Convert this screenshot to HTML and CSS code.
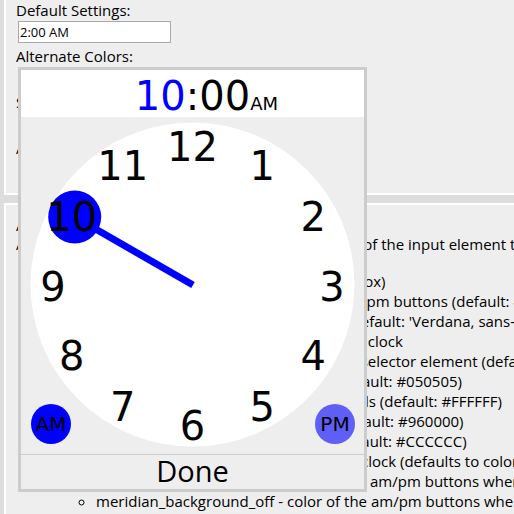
FILE: index.html
```html
<!DOCTYPE html>
<html lang="en">
<head>
<meta charset="utf-8">
<title>Clock Timepicker</title>
<link rel="stylesheet" href="styles.css">
</head>
<body>
<div class="page">
  <section class="panel panel-settings">
    <div class="label">Default Settings:</div>
    <div class="field"><input class="time-input" type="text" value="2:00 AM"></div>
    <div class="label">Alternate Colors:</div>
    <div class="field">
      <input class="time-input" type="text" value="10:00 AM">
      <div class="picker">
        <div class="picker-header">
          <span class="picker-spacer"></span>
          <span class="picker-time"><span class="picker-hour">10</span>:00</span>
          <span class="picker-meridian">AM</span>
        </div>
        <div class="picker-clock">
          <svg class="clock-face" width="343" height="337" viewBox="0 0 343 337">
            <circle cx="171.5" cy="167.5" r="162" fill="#ffffff"/>
            <line x1="172" y1="168" x2="53.7" y2="100" stroke="#0000ff" stroke-width="7"/>
            <circle cx="53.7" cy="100" r="26.5" fill="#0000ff"/>
            <g class="clock-numbers">
              <text x="171.5" y="44.1">12</text>
              <text x="241.25" y="62.8">1</text>
              <text x="292.3" y="113.85">2</text>
              <text x="311" y="183.6">3</text>
              <text x="292.3" y="253.35">4</text>
              <text x="241.25" y="304.4">5</text>
              <text x="171.5" y="323.1">6</text>
              <text x="101.75" y="304.4">7</text>
              <text x="50.7" y="253.35">8</text>
              <text x="32" y="183.6">9</text>
              <text x="50.7" y="113.85">10</text>
              <text x="101.75" y="62.8">11</text>
            </g>
          </svg>
          <button class="meridian meridian-am" type="button">AM</button>
          <button class="meridian meridian-pm" type="button">PM</button>
        </div>
        <button class="picker-done" type="button">Done</button>
      </div>
    </div>
    <div class="label">Show Seconds:</div>
    <div class="field"><input class="time-input" type="text" value="12:00:00 PM"></div>
    <div class="label">Auto Close:</div>
    <div class="field"><input class="time-input" type="text" value="6:30 PM"></div>
  </section>
  <section class="panel panel-options">
    <div class="heading">Alternate Colors Options:</div>
    <p class="intro">Any option below is optional; Done sets the value of the input element to the selected time.</p>
    <ul class="options">
      <li>background - color of picker (around box)</li>
      <li>meridian_size - width of the round am/pm buttons (default: 40px)</li>
      <li>font - font family for the clock digits (default: 'Verdana, sans-serif')</li>
      <li>face_color - the color of the face of the clock</li>
      <li>hand_color - color of the hand and its selector element (default: #0000FF)</li>
      <li>number_color - color of the hours (default: #050505)</li>
      <li>top_color - color of its header and labels (default: #FFFFFF)</li>
      <li>hover_color - color of hover hours (default: #960000)</li>
      <li>border_color - color of the border (default: #CCCCCC)</li>
      <li>dot_color - the color of the dot on the clock (defaults to color of hand)</li>
      <li>meridian_background_on - color of the am/pm buttons when selected (default: #0000FF)</li>
      <li>meridian_background_off - color of the am/pm buttons when not selected (default: #6666FF)</li>
    </ul>
  </section>
</div>
</body>
</html>
```

FILE: styles.css
```css
html, body {
  margin: 0;
  overflow: hidden;
}

body {
  background: #dddddd;
  font-family: "Open Sans", "Noto Sans", sans-serif;
  font-size: 15px;
  line-height: 20px;
  color: #000;
}

.page {
  width: 1100px;
  padding-left: 4px;
}

.panel {
  background: #eeeeee;
  border: 2px solid #ffffff;
}

.panel-settings {
  border-top: 0;
  padding: 0 10px 9px;
}

.panel-options {
  margin-top: 8px;
  padding: 11px 10px 20px;
}

.label {
  line-height: 20px;
}

.field {
  position: relative;
  margin: 1px 0 3px 2px;
}

.time-input {
  display: block;
  box-sizing: border-box;
  width: 153px;
  height: 22px;
  margin: 0;
  padding: 0 1px;
  border: 1px solid #a9a9a9;
  background: #ffffff;
  font-family: "Open Sans", "Noto Sans", sans-serif;
  font-size: 13px;
  color: #000;
}

/* clock picker popup */
.picker {
  position: absolute;
  top: 0;
  left: 0;
  z-index: 10;
  width: 343px;
  border: 3px solid #cccccc;
  background: #eeeeee;
}

.picker-header {
  display: grid;
  grid-template-columns: 1fr auto 1fr;
  align-items: baseline;
  box-sizing: border-box;
  height: 47px;
  padding-top: 6px;
  background: #ffffff;
  font-family: "DejaVu Sans", Verdana, sans-serif;
  color: #000;
}

.picker-time {
  font-size: 40px;
  line-height: 41px;
}

.picker-hour {
  color: #0000ff;
}

.picker-meridian {
  justify-self: start;
  font-size: 18px;
  line-height: 20px;
}

.picker-clock {
  position: relative;
  height: 337px;
}

.clock-face {
  display: block;
}

.clock-numbers text {
  font-family: "DejaVu Sans", Verdana, sans-serif;
  font-size: 40px;
  fill: #050505;
  text-anchor: middle;
}

.meridian {
  position: absolute;
  top: 287px;
  width: 40px;
  height: 40px;
  padding: 0;
  border: 0;
  border-radius: 50%;
  font-family: "DejaVu Sans", Verdana, sans-serif;
  font-size: 20px;
  line-height: 40px;
  color: #000;
  text-align: center;
}

.meridian-am {
  left: 10px;
  background: #0000ff;
}

.meridian-pm {
  left: 294px;
  background: #5f5ff8;
}

.picker-done {
  display: block;
  width: 100%;
  margin: 0;
  padding: 0 0 2px;
  border: 0;
  border-top: 1px solid #cccccc;
  background: #eeeeee;
  font-family: "Open Sans", "Noto Sans", sans-serif;
  font-size: 29px;
  line-height: 32px;
  color: #000;
  text-align: center;
}

/* options documentation */
.heading {
  line-height: 18px;
}

.intro {
  margin: 0 0 17px;
  white-space: nowrap;
}

.options {
  margin: 0;
  padding-left: 80px;
  list-style-type: circle;
}

.options li {
  white-space: nowrap;
  line-height: 20px;
}
```
